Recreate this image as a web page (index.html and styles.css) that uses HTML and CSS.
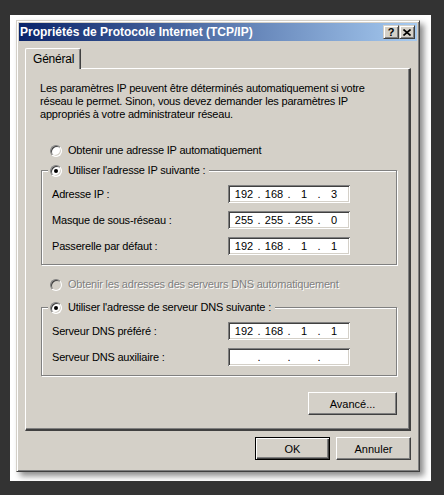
FILE: index.html
```html
<!DOCTYPE html>
<html lang="fr">
<head>
<meta charset="UTF-8">
<title>Propriétés de Protocole Internet (TCP/IP)</title>
<link rel="stylesheet" href="styles.css">
</head>
<body>
<div class="frame">
    <div class="window">
        <div class="titlebar">
            <span class="title">Propriétés de Protocole Internet (TCP/IP)</span>
            <div class="caption-buttons">
                <button type="button" class="cap-btn cap-help">?</button>
                <button type="button" class="cap-btn cap-close">
                    <svg width="8" height="7" viewBox="0 0 8 7"><path d="M0.5 0.5 L7.5 6.5 M7.5 0.5 L0.5 6.5" stroke="#000" stroke-width="1.6" fill="none"/></svg>
                </button>
            </div>
        </div>

        <div class="dialog-body">
            <div class="tabs">
                <div class="tab">Général</div>
            </div>

            <div class="panel">
                <p class="intro">Les paramètres IP peuvent être déterminés automatiquement si votre<br>réseau le permet. Sinon, vous devez demander les paramètres IP<br>appropriés à votre administrateur réseau.</p>

                <label class="radio first-radio"><span class="radio-mark"></span>Obtenir une adresse IP automatiquement</label>

                <fieldset class="group">
                    <legend><label class="radio"><span class="radio-mark checked"></span>Utiliser l'adresse IP suivante :</label></legend>
                    <div class="field-row">
                        <span class="field-label">Adresse IP :</span>
                        <div class="ip-box"><span class="seg">192</span><span class="dot">.</span><span class="seg">168</span><span class="dot">.</span><span class="seg">1</span><span class="dot">.</span><span class="seg">3</span></div>
                    </div>
                    <div class="field-row">
                        <span class="field-label">Masque de sous-réseau :</span>
                        <div class="ip-box"><span class="seg">255</span><span class="dot">.</span><span class="seg">255</span><span class="dot">.</span><span class="seg">255</span><span class="dot">.</span><span class="seg">0</span></div>
                    </div>
                    <div class="field-row">
                        <span class="field-label">Passerelle par défaut :</span>
                        <div class="ip-box"><span class="seg">192</span><span class="dot">.</span><span class="seg">168</span><span class="dot">.</span><span class="seg">1</span><span class="dot">.</span><span class="seg">1</span></div>
                    </div>
                </fieldset>

                <label class="radio disabled dns-auto"><span class="radio-mark"></span>Obtenir les adresses des serveurs DNS automatiquement</label>

                <fieldset class="group">
                    <legend><label class="radio"><span class="radio-mark checked"></span>Utiliser l'adresse de serveur DNS suivante :</label></legend>
                    <div class="field-row">
                        <span class="field-label">Serveur DNS préféré :</span>
                        <div class="ip-box"><span class="seg">192</span><span class="dot">.</span><span class="seg">168</span><span class="dot">.</span><span class="seg">1</span><span class="dot">.</span><span class="seg">1</span></div>
                    </div>
                    <div class="field-row">
                        <span class="field-label">Serveur DNS auxiliaire :</span>
                        <div class="ip-box"><span class="seg"></span><span class="dot">.</span><span class="seg"></span><span class="dot">.</span><span class="seg"></span><span class="dot">.</span><span class="seg"></span></div>
                    </div>
                </fieldset>

                <div class="panel-actions">
                    <button type="button" class="btn btn-advanced">Avancé...</button>
                </div>
            </div>

            <div class="dialog-actions">
                <button type="button" class="btn btn-default">OK</button>
                <button type="button" class="btn">Annuler</button>
            </div>
        </div>
    </div>
</div>
</body>
</html>
```

FILE: styles.css
```css
/* Boîte de dialogue style Windows classique */
* {
    box-sizing: border-box;
}

body {
    margin: 0;
    background-color: #333333;
    font-family: "Liberation Sans", Arial, sans-serif;
    font-size: 11px;
    letter-spacing: -0.2px;
    color: #000;
}

.frame {
    width: 421px;
    height: 466px;
    margin: 15px 0 0 10px;
    padding: 5px 0 0 6px;
    background-color: #ffffff;
}

.window {
    width: 404px;
    padding: 2px;
    background-color: #d4d0c8;
    border: 1px solid;
    border-color: #d4d0c8 #404040 #404040 #d4d0c8;
    box-shadow: inset 1px 1px #ffffff, inset -1px -1px #808080, 4px 4px 6px rgba(0, 0, 0, 0.45);
}

/* Barre de titre */
.titlebar {
    height: 18px;
    display: flex;
    align-items: center;
    justify-content: space-between;
    padding: 0 2px 0 1px;
    background: linear-gradient(to right, #0a246a, #a6caf0);
}

.title {
    color: #ffffff;
    font-weight: bold;
    font-size: 12px;
    letter-spacing: 0;
}

.caption-buttons {
    display: flex;
}

.cap-btn {
    width: 16px;
    height: 14px;
    padding: 0;
    border: 1px solid;
    border-color: #d4d0c8 #404040 #404040 #d4d0c8;
    box-shadow: inset 1px 1px #ffffff, inset -1px -1px #808080;
    background-color: #d4d0c8;
    display: flex;
    align-items: center;
    justify-content: center;
    font-family: "Liberation Sans", Arial, sans-serif;
    font-weight: bold;
    font-size: 11px;
    line-height: 1;
    color: #000;
}

.cap-close svg {
    display: block;
}

.dialog-body {
    padding: 7px 6px 9px 6px;
}

/* Onglet */
.tabs {
    display: flex;
}

.tab {
    position: relative;
    z-index: 1;
    height: 21px;
    margin-bottom: -1px;
    padding: 3px 6px 0 7px;
    background-color: #d4d0c8;
    border-top: 1px solid #ffffff;
    border-left: 1px solid #ffffff;
    border-right: 1px solid #404040;
    border-radius: 2px 2px 0 0;
    box-shadow: inset -1px 0 #808080;
    font-size: 12px;
}

.panel {
    padding: 13px 12px 14px 14px;
    border: 1px solid;
    border-width: 1px 2px 2px 1px;
    border-color: #ffffff #404040 #404040 #ffffff;
    box-shadow: inset -1px -1px #808080;
}

.intro {
    margin: 0;
    line-height: 13px;
}

/* Boutons radio */
.radio {
    display: flex;
    align-items: center;
    height: 13px;
    line-height: 13px;
    white-space: nowrap;
}

.radio-mark {
    position: relative;
    width: 12px;
    height: 12px;
    margin-right: 6px;
    border-radius: 50%;
    background-color: #ffffff;
    border: 1px solid;
    border-color: #808080 #ffffff #ffffff #808080;
    box-shadow: inset 1px 1px #404040, inset -1px -1px #d4d0c8;
}

.radio-mark.checked::after {
    content: "";
    position: absolute;
    left: 3px;
    top: 3px;
    width: 4px;
    height: 4px;
    border-radius: 50%;
    background-color: #000;
}

.first-radio {
    margin: 23px 0 0 10px;
}

.dns-auto {
    margin: 13px 0 0 10px;
}

.radio.disabled {
    color: #808080;
    text-shadow: 1px 1px 0 #ffffff;
}

.radio.disabled .radio-mark {
    background-color: #d4d0c8;
}

/* Cadres de groupe */
.group {
    margin: 7px 0 0 1px;
    padding: 8px 10px 9px 10px;
    border: 1px solid #808080;
    box-shadow: inset 1px 1px #ffffff, 1px 1px #ffffff;
}

.group + .dns-auto {
    margin-top: 13px;
}

.dns-auto + .group {
    margin-top: 10px;
}

.group legend {
    margin-left: -4px;
    padding: 0 4px 0 2px;
    background-color: #d4d0c8;
}

.field-row {
    display: flex;
    align-items: center;
    height: 18px;
}

.field-row + .field-row {
    margin-top: 8px;
}

.field-label {
    width: 176px;
}

.ip-box {
    width: 122px;
    height: 18px;
    padding: 0 2px;
    display: grid;
    grid-template-columns: 28px 2px 28px 2px 28px 2px 28px;
    align-items: center;
    background-color: #ffffff;
    box-shadow: inset 1px 1px #808080, inset -1px -1px #ffffff, inset 2px 2px #404040, inset -2px -2px #d4d0c8;
    font-size: 11px;
    letter-spacing: 0;
}

.seg {
    text-align: center;
}

.dot {
    display: flex;
    justify-content: center;
}

/* Boutons */
.btn {
    width: 75px;
    height: 23px;
    padding: 0;
    background-color: #d4d0c8;
    border: 1px solid;
    border-color: #ffffff #404040 #404040 #ffffff;
    box-shadow: inset -1px -1px #808080;
    font-family: "Liberation Sans", Arial, sans-serif;
    font-size: 11px;
    color: #000;
}

.btn-default {
    border-color: #000;
    box-shadow: inset 1px 1px #ffffff, inset -1px -1px #404040, inset -2px -2px #808080;
}

.btn-advanced {
    width: 89px;
}

.panel-actions {
    display: flex;
    justify-content: flex-end;
    margin-top: 16px;
}

.dialog-actions {
    display: flex;
    justify-content: flex-end;
    gap: 6px;
    margin-top: 6px;
}
```
